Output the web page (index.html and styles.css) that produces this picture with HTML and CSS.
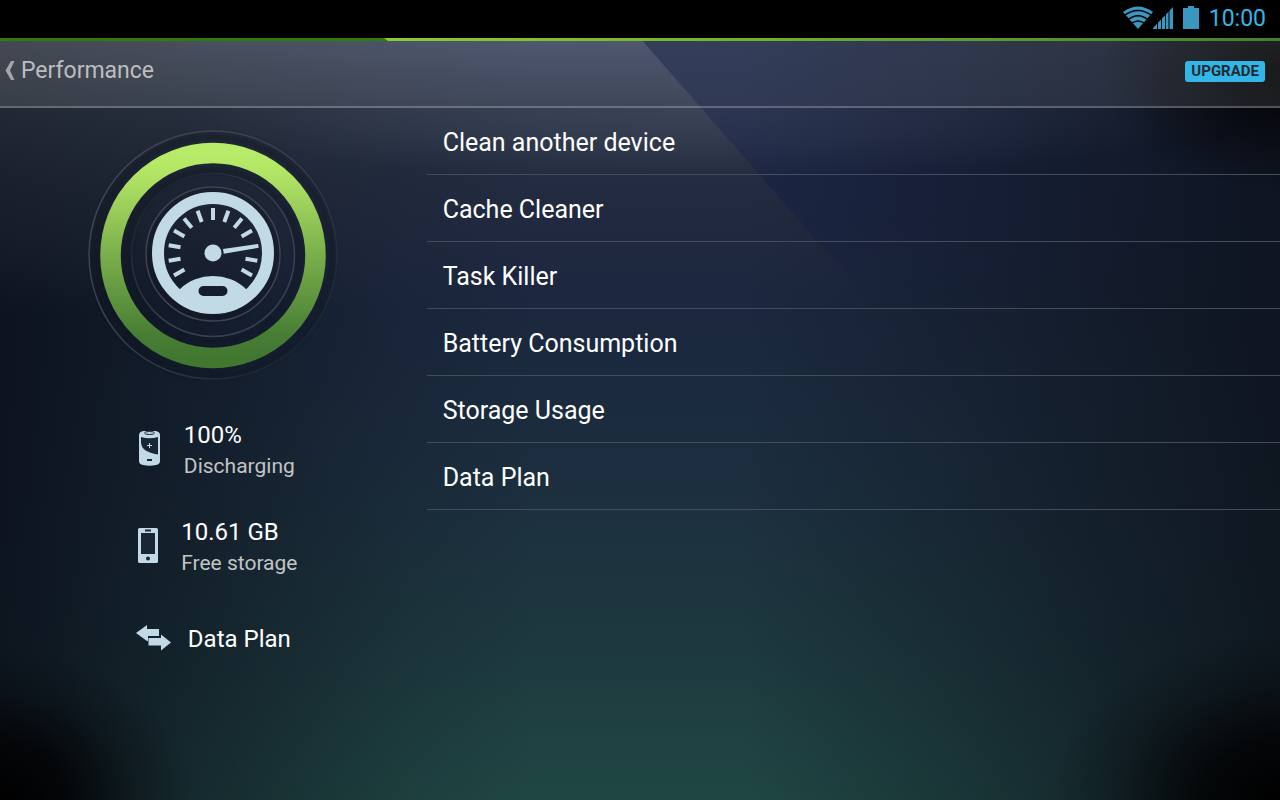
FILE: index.html
```html
<!DOCTYPE html>
<html lang="en">
<head>
<meta charset="utf-8">
<meta name="viewport" content="width=device-width, initial-scale=1">
<title>Performance</title>
<link rel="stylesheet" href="styles.css">
</head>
<body>
<div class="status-bar">
  <div class="status-signals">
    <svg class="wifi" width="30" height="24" viewBox="0 0 30 24" aria-hidden="true">
      <path class="signal-fill" d="M0 6Q15-5 30 6L15 23Z"/>
      <g class="wifi-gaps">
        <path d="M0 10.500Q15-1.500 30 10.500"/>
        <path d="M4 14.500Q15 5 26 14.500"/>
        <path d="M7 18.500Q15 11.500 23 18.500"/>
      </g>
    </svg>
    <svg width="20" height="24" viewBox="0 0 20 24" aria-hidden="true">
      <path class="signal-fill" d="M0 23V22L20 1V23Z"/>
      <path class="signal-gaps" d="M4.500 13V23M8.500 9V23M12.500 5V23M16 1V23"/>
    </svg>
  </div>
  <svg width="16" height="24" viewBox="0 0 16 24" aria-hidden="true">
    <path class="signal-fill" d="M5 0H11V2H16V23H0V2H5Z"/>
  </svg>
  <time class="clock">10:00</time>
</div>
<div class="app">
  <header class="app-bar">
    <button class="back" type="button">
      <svg width="10" height="20" viewBox="0 0 10 20" aria-hidden="true"><path d="M6 0H9.500L5 9.500L9.500 19H6L0.500 9.500Z"/></svg>
      <span>Performance</span>
    </button>
    <button class="upgrade" type="button">UPGRADE</button>
  </header>
  <main class="content">
    <section class="summary">
      <svg class="gauge" width="252" height="252" viewBox="0 0 252 252" role="img" aria-label="Performance gauge">
        <defs>
          <linearGradient id="ring" x1="0" y1="0" x2="0" y2="1">
            <stop offset="0" stop-color="#b8eb68"/>
            <stop offset="0.1" stop-color="#b2e565"/>
            <stop offset="0.5" stop-color="#7aae4b"/>
            <stop offset="0.9" stop-color="#467c33"/>
            <stop offset="1" stop-color="#42772f"/>
          </linearGradient>
          <linearGradient id="rim" x1="0" y1="0" x2="1" y2="1">
            <stop offset="0" stop-color="#464754"/>
            <stop offset="0.5" stop-color="#393b49"/>
            <stop offset="0.85" stop-color="#182a31"/>
          </linearGradient>
          <linearGradient id="rim-low" x1="0" y1="0" x2="1" y2="1">
            <stop offset="0.1" stop-color="#17252f"/>
            <stop offset="0.6" stop-color="#3b3f4f"/>
          </linearGradient>
          <filter id="soft" x="-20%" y="-20%" width="140%" height="140%"><feGaussianBlur stdDeviation="2"/></filter>
        </defs>
        <g class="shade" filter="url(#soft)">
          <circle cx="126" cy="127" r="119"/>
          <circle cx="126" cy="127" r="86"/>
          <circle cx="126" cy="126" r="62"/>
        </g>
        <circle class="rim" cx="126" cy="126" r="124" stroke="url(#rim)"/>
        <circle class="band" cx="126" cy="126.500" r="102.500" stroke="url(#ring)"/>
        <circle class="rim" cx="126" cy="126" r="81.500" stroke="url(#rim-low)"/>
        <circle class="rim" cx="126" cy="125" r="67" stroke="#40424f"/>
        <g transform="translate(126 124)">
          <circle class="dial" r="55"/>
          <path class="dial-line" d="M0-33V-45" transform="rotate(-120)"/>
          <path class="dial-line" d="M0-33V-45" transform="rotate(-100)"/>
          <path class="dial-line" d="M0-33V-45" transform="rotate(-80)"/>
          <path class="dial-line" d="M0-33V-45" transform="rotate(-60)"/>
          <path class="dial-line" d="M0-33V-45" transform="rotate(-40)"/>
          <path class="dial-line" d="M0-33V-45" transform="rotate(-20)"/>
          <path class="dial-line" d="M0-33V-45"/>
          <path class="dial-line" d="M0-33V-45" transform="rotate(20)"/>
          <path class="dial-line" d="M0-33V-45" transform="rotate(40)"/>
          <path class="dial-line" d="M0-33V-45" transform="rotate(60)"/>
          <path class="dial-line" d="M0-33V-45" transform="rotate(100)"/>
          <path class="dial-line" d="M0-33V-45" transform="rotate(120)"/>
          <path class="dial-fill" d="M-2.500-10.500L-1.900-46H1.900L2.500-10.500Z" transform="rotate(81)"/>
          <circle class="dial-fill" r="8.500"/>
          <path class="dial-fill" fill-rule="evenodd" d="M-33 36A48.400 48.400 0 0 1 33 36L36 40A54 54 0 0 1-36 40ZM-9.500 33A5 5 0 0 0-9.500 43H9.500A5 5 0 0 0 9.500 33Z"/>
        </g>
      </svg>
      <ul class="stats">
        <li class="stat">
          <svg width="36" height="40" viewBox="0 0 36 40" aria-hidden="true">
            <path class="glyph" d="M7 4Q7 1 11 0Q17.500-1 24 0Q28 1 28 4V30Q28 33 24 34Q17.500 35.500 11 34Q7 33 7 30Z"/>
            <ellipse class="glyph-line" cx="17.500" cy="2" rx="5" ry="1.500"/>
            <path class="glyph-cut" d="M9 6Q17.500 8.500 26 6V23.500Q9 21 9 11Z"/>
            <path class="glyph-mark" d="M15 14.500H20M17.500 12V17"/>
            <path class="glyph-hole" d="M15 29H20"/>
          </svg>
          <div class="stat-text">
            <span class="stat-value">100%</span>
            <span class="stat-label">Discharging</span>
          </div>
        </li>
        <li class="stat">
          <svg width="36" height="40" viewBox="0 0 36 40" aria-hidden="true">
            <rect class="glyph" x="9" y="0" width="20" height="35" rx="1.500"/>
            <rect class="glyph-cut" x="12" y="5" width="14" height="21"/>
            <path class="glyph-hole" d="M16 2.500H22"/>
            <circle class="glyph-cut" cx="19" cy="30.500" r="2"/>
          </svg>
          <div class="stat-text">
            <span class="stat-value">10.61 GB</span>
            <span class="stat-label">Free storage</span>
          </div>
        </li>
        <li class="stat">
          <svg width="36" height="36" viewBox="0 0 36 36" aria-hidden="true">
            <path class="glyph" d="M0 12L11 4V8H23V15H12V20H11ZM35 21.500L25 13.500V17H12.500V24.500H25V29.500Z"/>
          </svg>
          <div class="stat-text">
            <span class="stat-value">Data Plan</span>
          </div>
        </li>
      </ul>
    </section>
    <nav class="menu" aria-label="Performance tools">
      <a class="menu-item" href="#clean">Clean another device</a>
      <a class="menu-item" href="#cache">Cache Cleaner</a>
      <a class="menu-item" href="#tasks">Task Killer</a>
      <a class="menu-item" href="#battery">Battery Consumption</a>
      <a class="menu-item" href="#storage">Storage Usage</a>
      <a class="menu-item" href="#data">Data Plan</a>
    </nav>
  </main>
</div>
</body>
</html>
```
FILE: styles.css
```css
* { box-sizing: border-box; }

body {
  margin: 0;
  min-height: 100vh;
  display: flex;
  flex-direction: column;
  background: #000;
  color: #fff;
  font-family: Roboto, "Noto Sans", sans-serif;
}

button {
  border: 0;
  font-family: inherit;
  cursor: pointer;
}

.status-bar {
  height: 38px;
  padding: 0 14px;
  display: flex;
  align-items: center;
  justify-content: flex-end;
  gap: 10px;
  background: #000;
  color: #33b5e5;
}

.status-bar svg { display: block; margin-bottom: 2px; }
.status-signals { display: flex; }
.signal-fill { fill: #3a97bf; }
.wifi-gaps { fill: none; stroke: #000; stroke-width: 1.5; }
.signal-gaps { fill: none; stroke: #000; stroke-width: 1; }

.clock { font-size: 23px; line-height: 38px; }

.app {
  position: relative;
  flex: 1;
  display: flex;
  flex-direction: column;
  background:
    radial-gradient(ellipse 15% 20% at 0 100%, #000 0, #000000c0 35%, #00000040 70%, #0000 100%),
    radial-gradient(ellipse 18% 22% at 100% 100%, #000 0, #000000c0 35%, #00000040 70%, #0000 100%),
    radial-gradient(ellipse 14% 16% at 100% 4%, #000 0, #00000080 45%, #0000 100%),
    linear-gradient(90deg, #0b101be0 0, #0c121ca8 10%, #0d131d78 19%, #0d131d28 32%, #0d131d00 42%, #0d131d00 58%, #0d131d50 74%, #0d131da0 88%, #0c111ad0 100%),
    linear-gradient(#1b2645 0, #1b2542 24%, #1b283e 38%, #1c2f3f 60%, #1d383e 78%, #204744 100%);
}

/* diagonal sheen across the upper left */
.app::before {
  content: "";
  position: absolute;
  inset: 0;
  clip-path: polygon(0 0, 50% 0, 76% 50%, 0 50%);
  background: linear-gradient(#ffffff22 0, #4048506c 9%, #2c343c70 18%, #2a303a50 26%, #2a303a00 36%);
  pointer-events: none;
}

.app-bar {
  position: relative;
  height: 70px;
  padding: 0 15px 5px 5px;
  display: flex;
  align-items: center;
  justify-content: space-between;
  border-top: 3px solid #327a0c;
  border-bottom: 2px solid #ffffff38;
  background: linear-gradient(#ffffff1c, #ffffff18);
}

.app-bar::before {
  content: "";
  position: absolute;
  top: -3px;
  left: 30%;
  right: 0;
  height: 3px;
  background: linear-gradient(90deg, #8cca35 0, #75b52f 35%, #44802c 100%);
  clip-path: polygon(0 0, 100% 0, 100% 100%, 4px 100%);
}

.back {
  padding: 0;
  display: flex;
  align-items: center;
  gap: 6px;
  background: none;
  color: #bcbdc0;
  font-size: 23px;
  line-height: 32px;
}

.back svg { fill: #a3a5aa; }

.upgrade {
  padding: 0 6px;
  border-radius: 3px;
  background: #33b5e5;
  color: #1f2b33;
  font-size: 15px;
  font-weight: 700;
  line-height: 21px;
}

.content {
  position: relative;
  flex: 1;
  display: grid;
  grid-template-columns: 1fr 2fr;
}

.content::before {
  content: "";
  position: absolute;
  inset: 0;
  background: radial-gradient(ellipse 42% 72px at 55% 0, #ffffff14 0, #ffffff0c 50%, #fff0 100%);
  pointer-events: none;
}

.summary {
  padding-top: 21px;
  display: flex;
  flex-direction: column;
  align-items: center;
  gap: 39px;
}

.shade { fill: none; stroke: #0d1220; stroke-width: 6; opacity: 0.5; }
.rim { fill: none; stroke-width: 1.5; }
.band { fill: none; stroke-width: 20.5; }
.dial { fill: none; stroke: #c2dae6; stroke-width: 12; }
.dial-line { fill: none; stroke: #c2dae6; stroke-width: 4; }
.dial-fill { fill: #c2dae6; }

.stats {
  margin: 0;
  padding: 0;
  display: flex;
  flex-direction: column;
  gap: 35px;
  list-style: none;
}

.stat {
  min-height: 50px;
  display: flex;
  align-items: center;
  justify-content: center;
  gap: 16px;
}

.stat-text { display: flex; flex-direction: column; line-height: 31px; }
.stat-value { font-size: 24px; }
.stat-label { font-size: 21px; color: #c2c4c6; }

.glyph { fill: #c2dae6; }
.glyph-cut { fill: #1a2635; }
.glyph-line { fill: none; stroke: #1a2635; stroke-width: 1; }
.glyph-hole { fill: none; stroke: #1a2635; stroke-width: 2; }
.glyph-mark { fill: none; stroke: #c2dae6; stroke-width: 1; }

.menu { display: flex; flex-direction: column; }

.menu-item {
  height: 67px;
  padding: 2px 16px 0;
  display: flex;
  align-items: center;
  border-bottom: 1px solid #444c5b;
  color: #fff;
  font-size: 25px;
  text-decoration: none;
}
```
